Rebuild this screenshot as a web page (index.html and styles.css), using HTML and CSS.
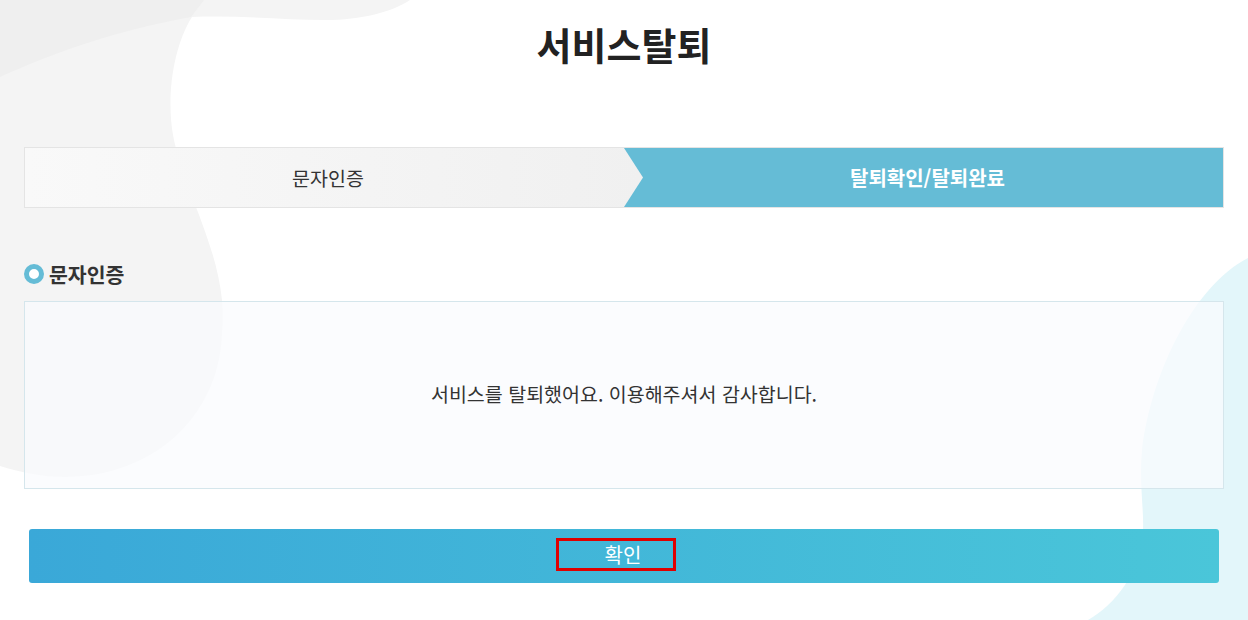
FILE: index.html
```html
<!DOCTYPE html>
<html lang="ko">
<head>
<meta charset="utf-8">
<title>서비스탈퇴</title>
<link rel="stylesheet" href="styles.css">
</head>
<body>
<div class="page">
  <svg class="bg" width="1248" height="620" viewBox="0 0 1248 620" aria-hidden="true">
    <path fill="#f4f4f4" d="M0,0 H410 C392,12 362,20 325,20 C285,20 240,15 192,17 C174,45 166,95 173,135 C182,185 216,240 222,300 C224,320 222,330 222,335 C218,420 150,477 65,477 C40,477 20,472 0,466 Z"/>
    <path fill="#efefef" d="M0,0 H204 L191,17 C120,30 60,50 0,77 Z"/>
    <path fill="#e3f6fa" d="M1248,258 C1195,285 1152,370 1142,450 C1139,482 1144,510 1143,530 C1141,572 1115,605 1088,620 H1248 Z"/>
  </svg>
  <main class="content">
    <h1 class="title">서비스탈퇴</h1>
    <div class="steps">
      <div class="step step-done">문자인증</div>
      <div class="step step-current">탈퇴확인/탈퇴완료</div>
    </div>
    <h2 class="section-title"><span class="ring"></span>문자인증</h2>
    <div class="message-box">
      <p class="message">서비스를 탈퇴했어요. 이용해주셔서 감사합니다.</p>
    </div>
    <button class="confirm" type="button"><span class="confirm-label">확인</span></button>
  </main>
</div>
</body>
</html>
```

FILE: styles.css
```css
html, body {
  margin: 0;
  padding: 0;
  background: #ffffff;
}
body {
  font-family: "Noto Sans CJK KR", "Noto Sans", sans-serif;
  color: #333333;
}
.page {
  position: relative;
  width: 1248px;
  height: 620px;
  overflow: hidden;
}
.bg {
  position: absolute;
  left: 0;
  top: 0;
  z-index: 0;
}
.content {
  position: relative;
  z-index: 1;
  padding: 21px 24px 0 24px;
}
.title {
  margin: 0;
  text-align: center;
  font-size: 38px;
  line-height: 46px;
  font-weight: 700;
  color: #222222;
  letter-spacing: 0;
}
.steps {
  margin-top: 80px;
  display: flex;
  height: 59px;
  border: 1px solid #e4e4e4;
  background: #65bcd6;
}
.step {
  display: flex;
  align-items: center;
  justify-content: center;
}
.step-done {
  width: 618px;
  flex: none;
  padding-right: 12px;
  box-sizing: border-box;
  background: linear-gradient(to right, #f9f9f9, #f0f0f0);
  clip-path: polygon(0 0, 599px 0, 100% 50%, 599px 100%, 0 100%);
  color: #333333;
  font-size: 19.5px;
  position: relative;
  z-index: 1;
}
.step-current {
  flex: 1;
  margin-left: -19px;
  color: #ffffff;
  font-weight: 700;
  font-size: 20px;
  padding-left: 8px;
}
.section-title {
  margin: 52px 0 0 0;
  display: flex;
  align-items: center;
  gap: 5px;
  height: 28px;
  font-size: 20.5px;
  font-weight: 700;
  color: #333333;
}
.ring {
  width: 20px;
  height: 20px;
  box-sizing: border-box;
  border: 5px solid #65bcd6;
  border-radius: 50%;
  background: #ffffff;
  flex: none;
}
.message-box {
  margin-top: 13px;
  height: 188px;
  box-sizing: border-box;
  border: 1px solid #d5e6ec;
  background: rgba(250, 251, 253, 0.75);
  display: flex;
  align-items: center;
  justify-content: center;
}
.message {
  margin: 0 0 3px 0;
  font-size: 19.5px;
  color: #333333;
}
.confirm {
  display: flex;
  align-items: center;
  justify-content: center;
  margin: 40px 5px 0 5px;
  width: calc(100% - 10px);
  height: 54px;
  border: none;
  border-radius: 3px;
  background: linear-gradient(to right, #3aa8d8, #4ac6d9);
  font-family: inherit;
  padding: 0;
  cursor: pointer;
}
.confirm-label {
  width: 120px;
  height: 33px;
  box-sizing: border-box;
  border: 3px solid #e00000;
  margin: 0 16px 4px 0;
  padding-left: 14px;
  display: flex;
  align-items: center;
  justify-content: center;
  color: #ffffff;
  font-size: 20px;
}
```
